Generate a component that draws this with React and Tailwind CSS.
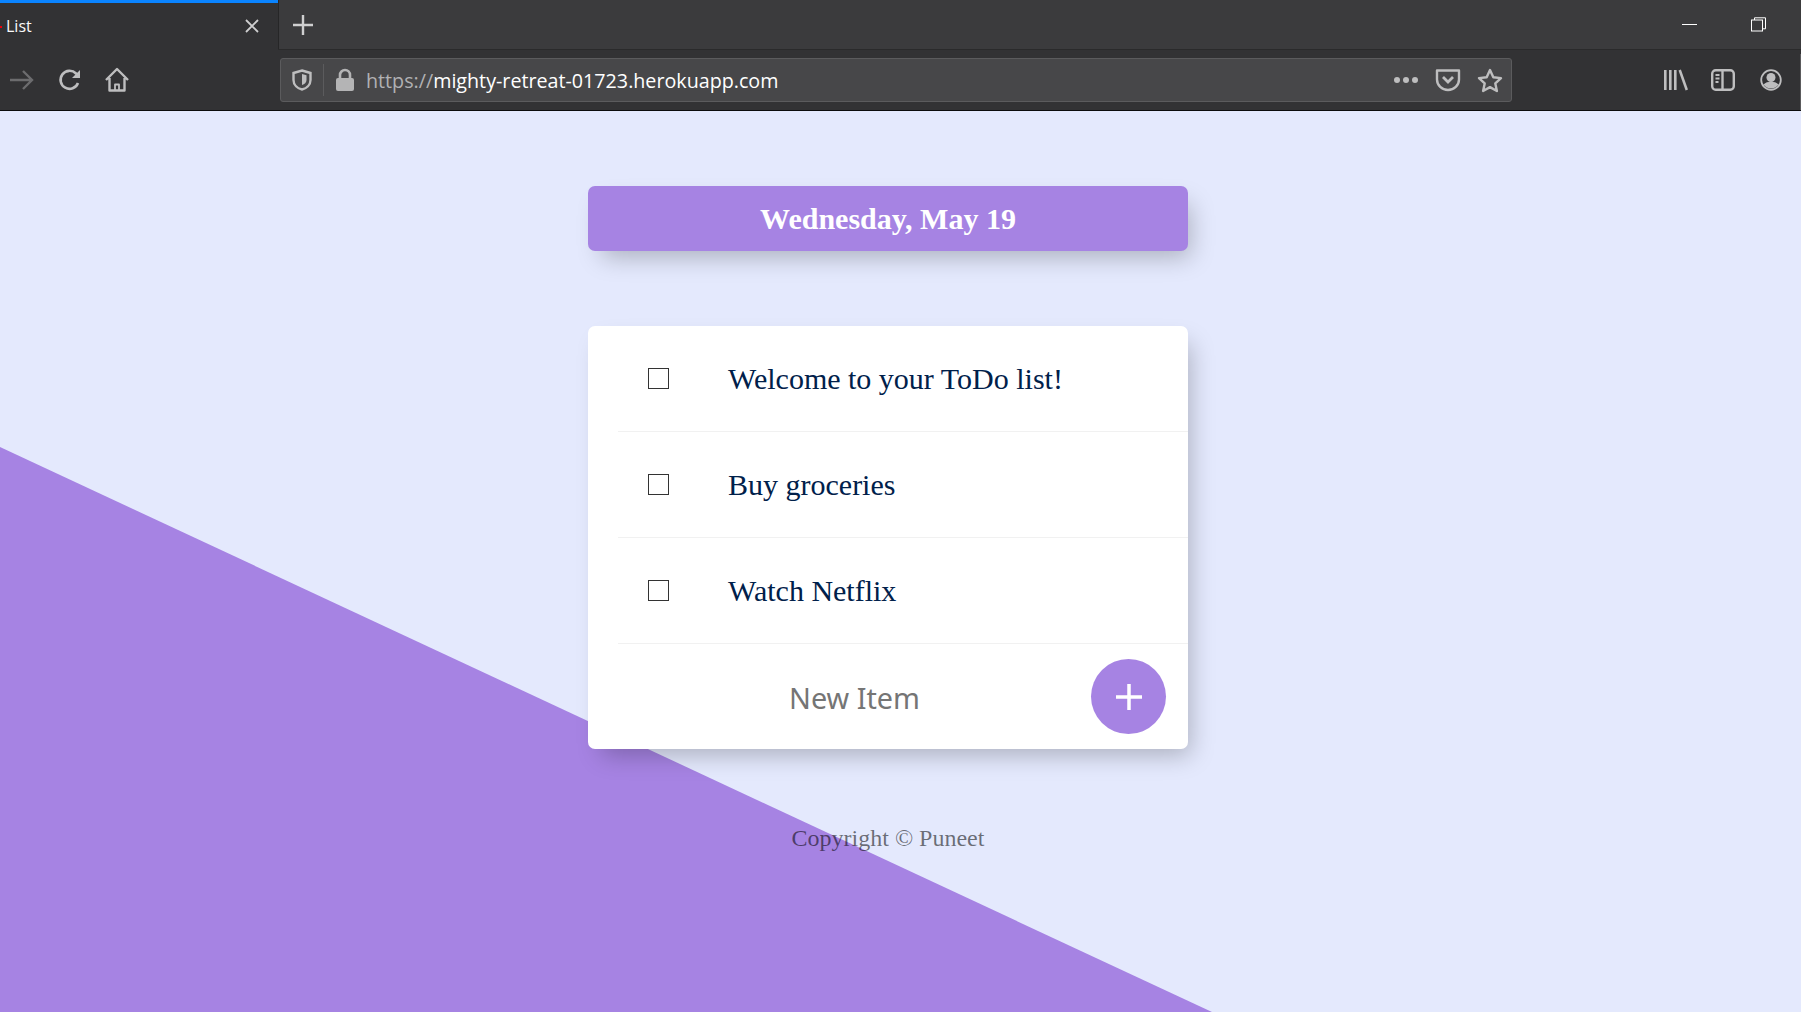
import { useState } from 'react'

// Icons for the browser chrome
function BackArrow() {
  return (
    <svg width="26" height="22" viewBox="0 0 26 22" fill="none" stroke="#6c6c6e" strokeWidth="2.4">
      <path d="M1 11h22M14 2l9 9-9 9" />
    </svg>
  )
}

function Reload() {
  return (
    <svg width="24" height="24" viewBox="0 0 24 24" fill="none" stroke="#bebebf" strokeWidth="2.6">
      <path d="M20 15a9 9 0 1 1-2-9.5L21 9" />
      <path d="M22 2v8h-8" fill="#bebebf" stroke="none" />
    </svg>
  )
}

function Home() {
  return (
    <svg width="26" height="26" viewBox="0 0 26 26" fill="none" stroke="#bebebf" strokeWidth="2.4" strokeLinejoin="round">
      <path d="M2 13L13 2l11 11M5.500 11v12.500h15V11" />
      <path d="M11 23.500v-6h4v6" strokeWidth="1.800" />
    </svg>
  )
}

function Shield() {
  return (
    <svg width="20" height="22" viewBox="0 0 20 22">
      <path d="M10 1.500l8.500 2.500v7c0 5-4 8.500-8.500 9.500-4.500-1-8.500-4.500-8.500-9.500V4z" fill="none" stroke="#bebebf" strokeWidth="2.4" />
      <path d="M10 5l4.500 1.300v4.700c0 2.500-2 4.300-4.500 5z" fill="#bebebf" />
    </svg>
  )
}

function Lock() {
  return (
    <svg width="20" height="24" viewBox="0 0 20 24">
      <path d="M5 11V7a5 5 0 0 1 10 0v4" fill="none" stroke="#b4b4b5" strokeWidth="2.600" />
      <rect x="1" y="10" width="18" height="13" rx="2" fill="#b4b4b5" />
    </svg>
  )
}

function Pocket() {
  return (
    <svg width="26" height="24" viewBox="0 0 26 24" fill="none" stroke="#bebebf" strokeWidth="2.400">
      <path d="M2 2.500h22v9a11 10.500 0 0 1-22 0z" strokeLinejoin="round" />
      <path d="M8 9l5 5 5-5" strokeWidth="2.800" />
    </svg>
  )
}

function Star() {
  return (
    <svg width="26" height="25" viewBox="0 0 26 25" fill="none" stroke="#bebebf" strokeWidth="2.400" strokeLinejoin="round">
      <path d="M13 2l3.300 7.200 7.700.9-5.700 5.300 1.600 7.600L13 19.100 6.100 23l1.600-7.600L2 10.100l7.700-.9z" />
    </svg>
  )
}

function Library() {
  return (
    <svg width="24" height="22" viewBox="0 0 24 22" fill="#bebebf">
      <rect x="0" y="1" width="2.600" height="20" />
      <rect x="5" y="1" width="2.600" height="20" />
      <rect x="10" y="1" width="2.600" height="20" />
      <path d="M14.500 1.500l2.400-1L24 20.500l-2.400 1z" />
    </svg>
  )
}

function Sidebar() {
  return (
    <svg width="24" height="22" viewBox="0 0 24 22" fill="none" stroke="#bebebf" strokeWidth="2.400">
      <rect x="1.200" y="1.200" width="21.600" height="19.600" rx="3.500" />
      <path d="M11.500 1v20" />
      <path d="M4.500 6h4M4.500 9.500h4M4.500 13h3" strokeWidth="1.800" />
    </svg>
  )
}

function Account() {
  return (
    <svg width="22" height="22" viewBox="0 0 22 22" fill="#bebebf">
      <circle cx="11" cy="11" r="9.800" fill="none" stroke="#bebebf" strokeWidth="1.800" />
      <circle cx="11" cy="8.500" r="4.500" />
      <path d="M3.500 15.500c2-2.200 4.500-2.800 7.500-2.800s5.500.6 7.500 2.800c-1.800 2.800-4.500 4-7.500 4s-5.700-1.200-7.500-4z" />
    </svg>
  )
}

function BrowserChrome() {
  return (
    <div className="font-['Open_Sans',sans-serif]">
      <div className="flex h-[50px] bg-[#3b3b3d] border-b border-[#2a2a2b]">
        <div className="w-[278px] h-[50px] bg-[#323234] border-t-[3px] border-[#0a84ff] flex items-center pl-[6px] pr-[18px] text-[#f9f9fa] text-[16px]">
          <span className="w-[2px] h-[2px] -ml-[6px] mr-[4px] bg-red-600" />
          <span className="-mt-[1px]">List</span>
          <svg className="ml-auto -mt-[1px]" width="16" height="16" viewBox="0 0 16 16" stroke="#cfcfd0" strokeWidth="1.800"><path d="M2 2l12 12M14 2L2 14" /></svg>
        </div>
        <div className="w-px bg-[#262627]" />
        <div className="pl-[13px] flex items-center">
          <svg width="22" height="22" viewBox="0 0 22 22" stroke="#cfcfd0" strokeWidth="2.400"><path d="M11 1v20M1 11h20" /></svg>
        </div>
        <div className="ml-auto flex items-center pr-[35px] gap-[54px]">
          <div className="w-[15px] h-px bg-white" />
          <svg width="15" height="15" viewBox="0 0 15 15" fill="none" stroke="#fff" strokeWidth="1">
            <rect x="0.500" y="3" width="11" height="11" />
            <path d="M3.500 3V.800h11v11H11.500" />
          </svg>
        </div>
      </div>
      <div className="flex items-center h-[61px] bg-[#323234] border-b border-[#0c0c0d]">
        <div className="w-[280px] flex items-center pl-[9px]">
          <BackArrow />
          <div className="ml-[23px]"><Reload /></div>
          <div className="ml-[22px]"><Home /></div>
        </div>
        <div className="w-[1232px] h-[44px] bg-[#474749] border border-[#5b5b5d] rounded-[3px] flex items-center">
          <div className="pl-[11px] w-[43px] h-[32px] flex items-center border-r border-[#5b5b5d]"><Shield /></div>
          <div className="ml-[11px]"><Lock /></div>
          <div className="ml-[11px] pt-[1px] text-[19.7px] text-[#b1b1b3] whitespace-nowrap">https://<span className="text-white">mighty-retreat-01723.herokuapp.com</span></div>
          <div className="ml-auto flex items-center pr-[8px]">
            <div className="flex gap-[3px]">
              <span className="w-[6px] h-[6px] rounded-full bg-[#bebebf]" />
              <span className="w-[6px] h-[6px] rounded-full bg-[#bebebf]" />
              <span className="w-[6px] h-[6px] rounded-full bg-[#bebebf]" />
            </div>
            <div className="ml-[17px]"><Pocket /></div>
            <div className="ml-[16px]"><Star /></div>
          </div>
        </div>
        <div className="ml-auto flex items-center pr-[18px]">
          <Library />
          <div className="ml-[23px]"><Sidebar /></div>
          <div className="ml-[25px]"><Account /></div>
        </div>
        <div className="w-px h-[56px] self-end bg-[#5b5b5d]" />
      </div>
    </div>
  )
}

const initialItems = ['Welcome to your ToDo list!', 'Buy groceries', 'Watch Netflix']

function App() {
  const [newItem, setNewItem] = useState('')

  return (
    <div className="h-[1012px] flex flex-col overflow-hidden font-['Liberation_Serif',serif]">
      <BrowserChrome />
      <div className="relative flex-1 bg-[#e4e9fd]">
        {/* diagonal background */}
        <div className="absolute inset-0 bg-[#a683e3] [clip-path:polygon(0_336px,1212px_901px,0_901px)]" />
        <div className="relative w-[600px] ml-[588px] pt-[75px]">
          <div className="h-[65px] bg-[#a683e3] rounded-[7px] shadow-[8px_12px_24px_-6px_rgba(0,0,0,0.25)] flex items-center justify-center text-white font-bold text-[30px]">
            Wednesday, May 19
          </div>
          <div className="mt-[75px] h-[423px] bg-white rounded-[7px] shadow-[8px_12px_24px_-6px_rgba(0,0,0,0.25)]">
            {initialItems.map((item) => (
              <div key={item} className="flex items-center h-[106px] ml-[30px] border-b border-[#f1f1f1]">
                <div className="w-[21px] h-[21px] ml-[30px] border-[1.5px] border-[#333333]" />
                <p className="ml-[59px] text-[30px] text-[#00204a]">{item}</p>
              </div>
            ))}
            <div className="relative h-[105px] flex items-center">
              <input
                value={newItem}
                onChange={(e) => setNewItem(e.target.value)}
                placeholder="New Item"
                className="ml-[201px] w-[260px] pt-[2px] text-[28.8px] outline-none font-['Noto_Sans',sans-serif] placeholder:text-[#757575]"
              />
              <div className="ml-auto mr-[22px] w-[75px] h-[75px] rounded-full bg-[#a683e3] flex items-center justify-center">
                <svg width="28" height="28" viewBox="0 0 28 28" stroke="#fff" strokeWidth="3.500"><path d="M14 1v26M1 14h26" /></svg>
              </div>
            </div>
          </div>
          <p className="mt-[71px] text-center text-[24px] text-black/55">Copyright © Puneet</p>
        </div>
      </div>
    </div>
  )
}

export default App
